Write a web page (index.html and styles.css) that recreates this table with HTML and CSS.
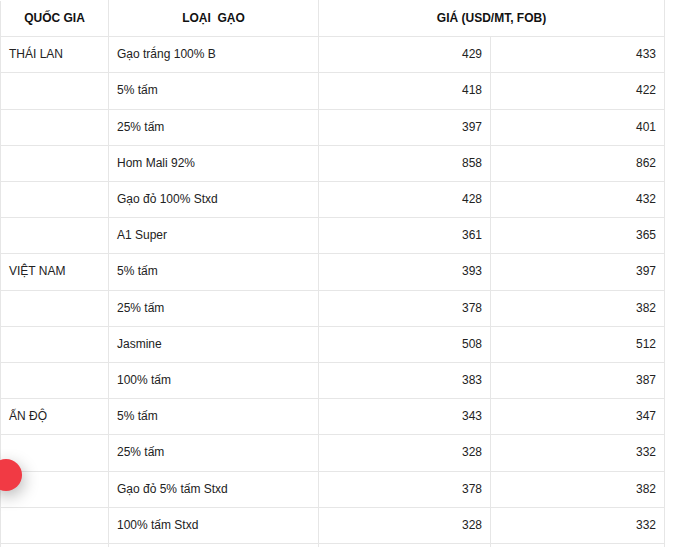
FILE: index.html
```html
<!DOCTYPE html>
<html lang="vi">
<head>
<meta charset="utf-8">
<title>Giá gạo</title>
<link rel="stylesheet" href="styles.css">
</head>
<body>
<table class="price-table">
  <colgroup>
    <col class="c1"><col class="c2"><col class="c3"><col class="c4">
  </colgroup>
  <thead>
    <tr>
      <th>QUỐC GIA</th>
      <th>LOẠI&nbsp; GẠO</th>
      <th colspan="2">GIÁ (USD/MT, FOB)</th>
    </tr>
  </thead>
  <tbody>
    <tr><td>THÁI LAN</td><td>Gạo trắng 100% B</td><td class="num">429</td><td class="num">433</td></tr>
    <tr><td></td><td>5% tấm</td><td class="num">418</td><td class="num">422</td></tr>
    <tr><td></td><td>25% tấm</td><td class="num">397</td><td class="num">401</td></tr>
    <tr><td></td><td>Hom Mali 92%</td><td class="num">858</td><td class="num">862</td></tr>
    <tr><td></td><td>Gạo đỏ 100% Stxd</td><td class="num">428</td><td class="num">432</td></tr>
    <tr><td></td><td>A1 Super</td><td class="num">361</td><td class="num">365</td></tr>
    <tr><td>VIỆT NAM</td><td>5% tấm</td><td class="num">393</td><td class="num">397</td></tr>
    <tr><td></td><td>25% tấm</td><td class="num">378</td><td class="num">382</td></tr>
    <tr><td></td><td>Jasmine</td><td class="num">508</td><td class="num">512</td></tr>
    <tr><td></td><td>100% tấm</td><td class="num">383</td><td class="num">387</td></tr>
    <tr><td>ẤN ĐỘ</td><td>5% tấm</td><td class="num">343</td><td class="num">347</td></tr>
    <tr><td></td><td>25% tấm</td><td class="num">328</td><td class="num">332</td></tr>
    <tr><td></td><td>Gạo đỏ 5% tấm Stxd</td><td class="num">378</td><td class="num">382</td></tr>
    <tr><td></td><td>100% tấm Stxd</td><td class="num">328</td><td class="num">332</td></tr>
    <tr><td></td><td></td><td class="num"></td><td class="num"></td></tr>
  </tbody>
</table>
<div class="fab"></div>
</body>
</html>
```
FILE: styles.css
```css
html, body {
  margin: 0;
  padding: 0;
  background: #fff;
}
body {
  font-family: "Liberation Sans", Arial, sans-serif;
  font-size: 12px;
  color: #222;
  overflow: hidden;
}
.price-table {
  border-collapse: collapse;
  table-layout: fixed;
  width: 664px;
}
.c1 { width: 108px; }
.c2 { width: 210px; }
.c3 { width: 172px; }
.c4 { width: 174px; }
.price-table th,
.price-table td {
  border: 1px solid #e6e6e6;
  padding: 8px;
  line-height: 19.2px;
  vertical-align: top;
  text-align: left;
  font-weight: normal;
}
.price-table thead th {
  border-top: 1px solid #fff;
  text-align: center;
  font-weight: bold;
  color: #111;
}
.price-table td.num {
  text-align: right;
}
.price-table tbody tr:last-child td {
  height: 19.2px;
}
.fab {
  position: fixed;
  left: -10px;
  top: 459px;
  width: 32px;
  height: 32px;
  border-radius: 50%;
  background: #f13a44;
  box-shadow: 2px 5px 16px rgba(0, 0, 0, 0.28);
}
```
